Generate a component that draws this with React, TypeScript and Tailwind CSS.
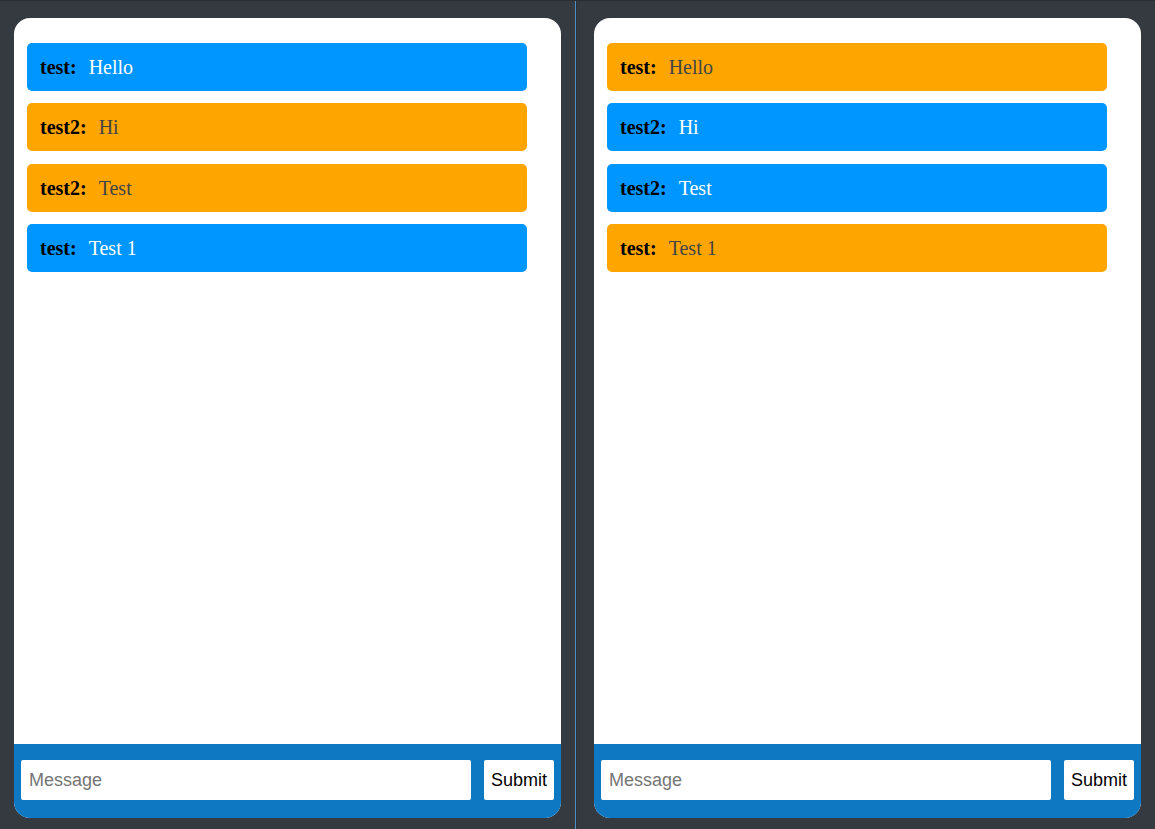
type Msg = { user: string; text: string };

const messages: Msg[] = [
  { user: 'test', text: 'Hello' },
  { user: 'test2', text: 'Hi' },
  { user: 'test2', text: 'Test' },
  { user: 'test', text: 'Test 1' },
];

const ChatWindow = ({ me }: { me: string }) => {
  return (
    <div className="flex h-[800px] w-[547px] flex-col overflow-hidden rounded-[16px] bg-white">
      <div className="flex flex-1 flex-col gap-[12.3px] px-[13px] pt-[25px]">
        {messages.map((m, i) => {
          const mine = m.user === me;
          return (
            <div
              key={i}
              className={`flex h-12 w-[500px] items-center rounded-[5px] pl-[13px] font-['Liberation_Serif',serif] text-[20px] ${
                mine ? 'bg-[#0096ff]' : 'bg-[#ffa500]'
              }`}
            >
              <span className="mr-[12px] font-bold text-black">{m.user}:</span>
              <span className={mine ? 'text-white' : 'text-[#444444]'}>{m.text}</span>
            </div>
          );
        })}
      </div>
      <form
        className="flex h-[74px] items-start gap-[13px] bg-[#0e78c2] px-[7px] pt-[16px]"
        onSubmit={(e) => e.preventDefault()}
      >
        <input
          className="h-10 w-[450px] rounded-[2px] bg-white px-[8px] font-['Liberation_Sans',sans-serif] text-[18px] text-black placeholder:text-[#757575] focus:outline-none"
          placeholder="Message"
        />
        <button
          type="submit"
          className="h-10 w-[70px] rounded-[2px] bg-white font-['Liberation_Sans',sans-serif] text-[18px] text-black"
        >
          Submit
        </button>
      </form>
    </div>
  );
};

export default function App() {
  return (
    <div className="flex h-[829px] w-[1155px] border-t border-[#2a2e33] bg-[#343a40]">
      <div className="w-[575px] px-[14px] pt-[17px]">
        <ChatWindow me="test" />
      </div>
      <div className="w-px bg-[#4b8fc4]" />
      <div className="w-px bg-[#2b3035]" />
      <div className="flex-1 pl-[17px] pt-[17px]">
        <ChatWindow me="test2" />
      </div>
    </div>
  );
}
